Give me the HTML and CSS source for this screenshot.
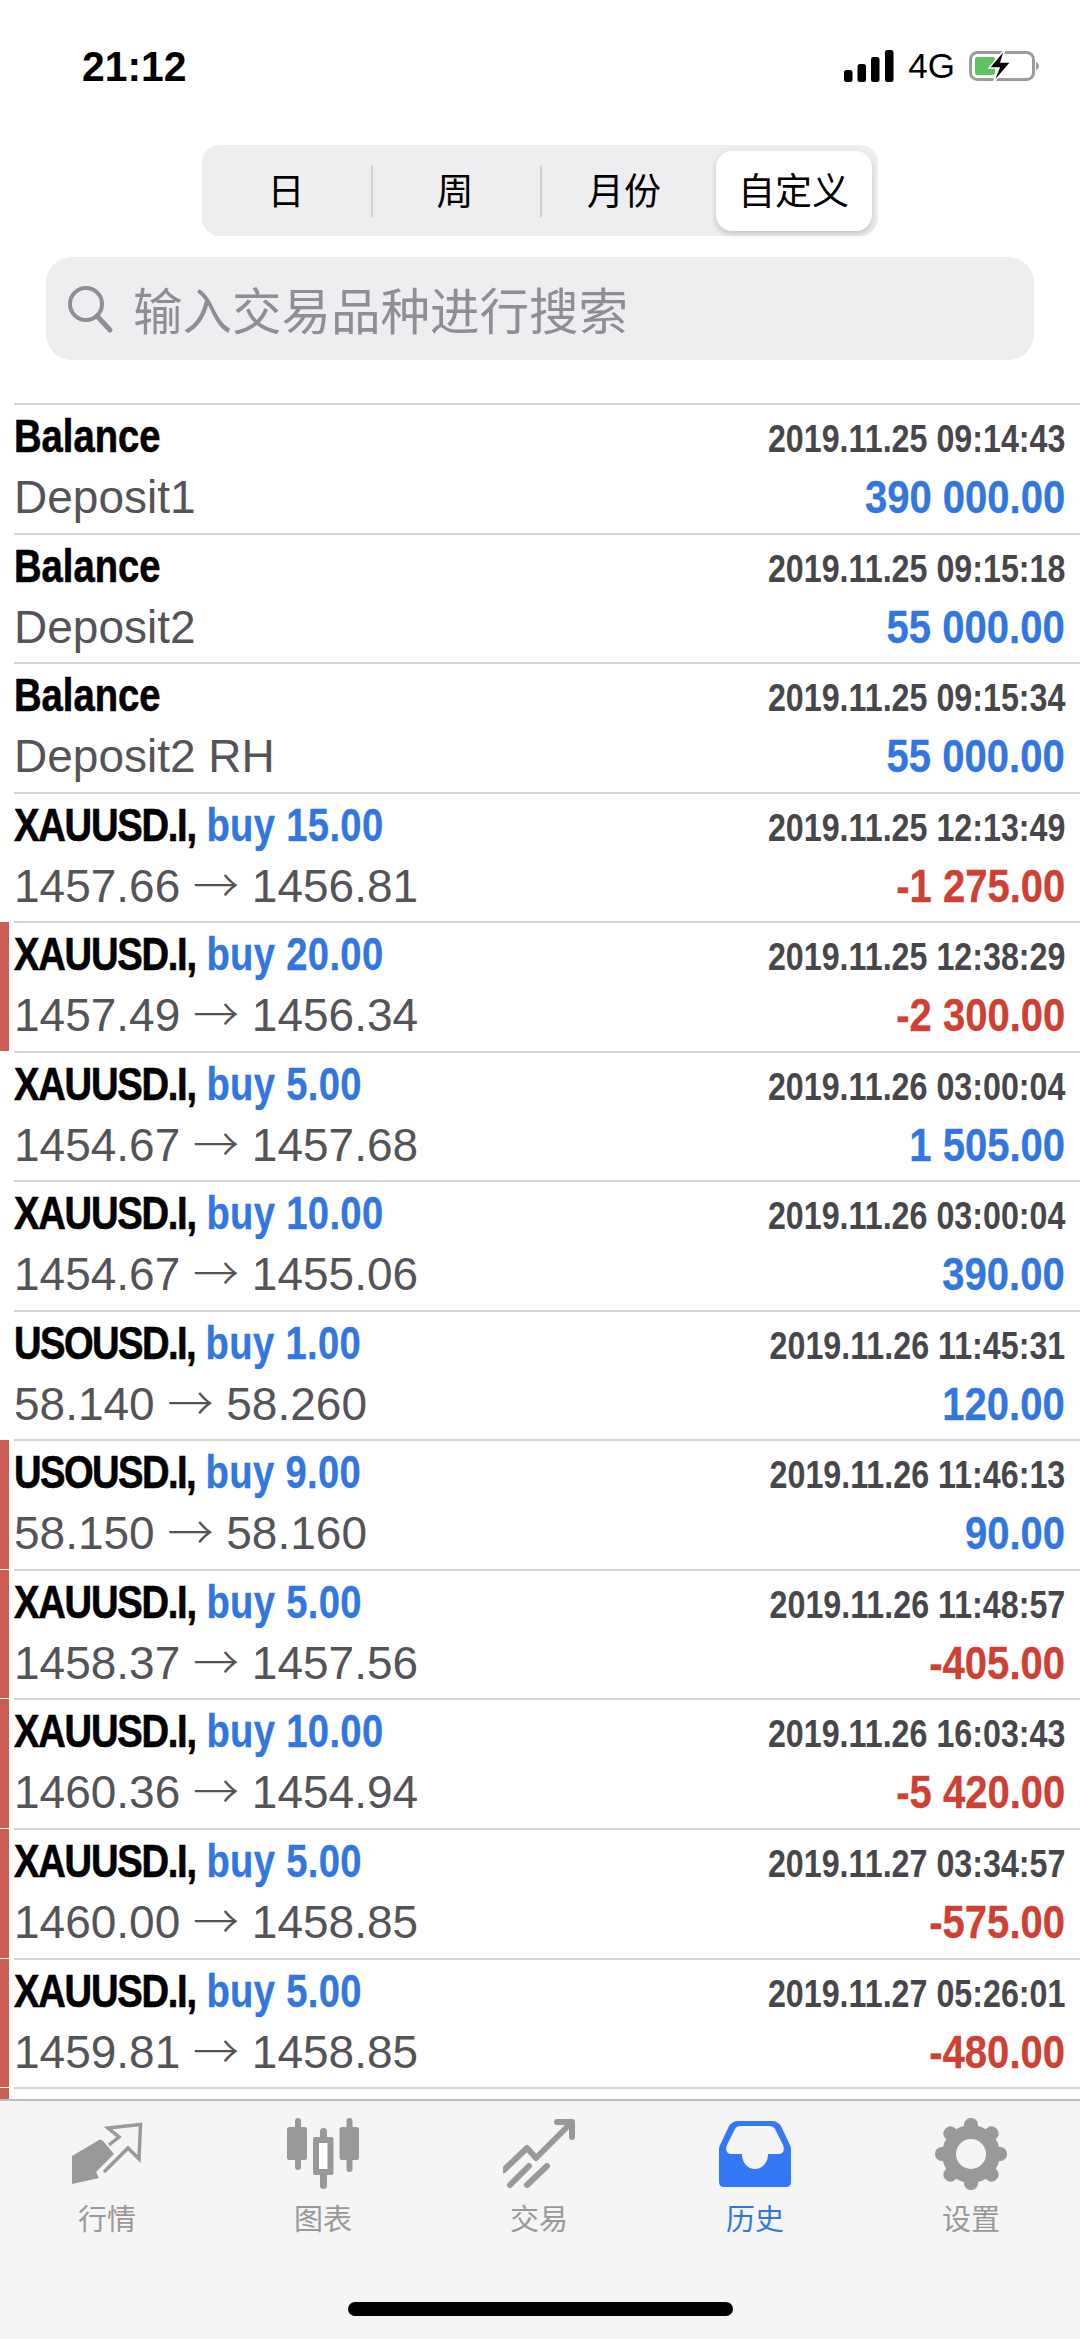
FILE: index.html
```html
<!DOCTYPE html>
<html lang="zh">
<head>
    <meta charset="UTF-8">
    <meta name="viewport" content="width=device-width, initial-scale=1.0">
    <title>历史</title>
    <link rel="stylesheet" href="styles.css">
</head>
<body>
<div class="screen">
    <div class="status">
        <span class="clock">21:12</span>
        <div class="status_right">
            <svg width="50" height="32" viewBox="0 0 50 32"><rect x="0" y="20" width="8.5" height="12" rx="2.5"/><rect x="13.500" y="14" width="8.5" height="18" rx="2.5"/><rect x="27" y="7" width="8.5" height="25" rx="2.5"/><rect x="41" y="0" width="8.5" height="32" rx="2.5"/></svg>
            <span class="net">4G</span>
            <svg width="70" height="36" viewBox="0 0 70 36"><rect x="1.500" y="4.500" width="63" height="27" rx="7" fill="none" stroke="#9b9b9b" stroke-width="3"/><rect x="6" y="9" width="20" height="18" rx="2" fill="#5fc25f"/><path d="M67 14c2 1 3 2.500 3 4s-1 3-3 4z" fill="#9b9b9b"/><path d="M36 1 L20 20 H30 L24 35 L42 14 H32 Z" fill="#000" stroke="#fff" stroke-width="1.500"/></svg>
        </div>
    </div>

    <div class="segment">
        <span class="seg_item">日</span>
        <span class="seg_item seg_line">周</span>
        <span class="seg_item seg_line">月份</span>
        <span class="seg_item seg_active">自定义</span>
    </div>

    <div class="search">
        <svg width="50" height="50" viewBox="0 0 50 50"><circle cx="20" cy="20" r="16" fill="none" stroke="#8e8e93" stroke-width="4"/><path d="M31 32 L44 46" stroke="#8e8e93" stroke-width="5" stroke-linecap="round"/></svg>
        <span>输入交易品种进行搜索</span>
    </div>

    <div class="list">
        <div class="row">
            <div class="line"><span class="title"><b>Balance</b></span><span class="time">2019.11.25 09:14:43</span></div>
            <div class="line"><span class="sub">Deposit1</span><span class="amount blue">390 000.00</span></div>
        </div>
        <div class="row">
            <div class="line"><span class="title"><b>Balance</b></span><span class="time">2019.11.25 09:15:18</span></div>
            <div class="line"><span class="sub">Deposit2</span><span class="amount blue">55 000.00</span></div>
        </div>
        <div class="row">
            <div class="line"><span class="title"><b>Balance</b></span><span class="time">2019.11.25 09:15:34</span></div>
            <div class="line"><span class="sub">Deposit2 RH</span><span class="amount blue">55 000.00</span></div>
        </div>
        <div class="row">
            <div class="line"><span class="title"><b class="sym">XAUUSD.I,</b> <i>buy 15.00</i></span><span class="time">2019.11.25 12:13:49</span></div>
            <div class="line"><span class="sub">1457.66 <span class="arrow">→</span> 1456.81</span><span class="amount red">-1 275.00</span></div>
        </div>
        <div class="row mark">
            <div class="line"><span class="title"><b class="sym">XAUUSD.I,</b> <i>buy 20.00</i></span><span class="time">2019.11.25 12:38:29</span></div>
            <div class="line"><span class="sub">1457.49 <span class="arrow">→</span> 1456.34</span><span class="amount red">-2 300.00</span></div>
        </div>
        <div class="row">
            <div class="line"><span class="title"><b class="sym">XAUUSD.I,</b> <i>buy 5.00</i></span><span class="time">2019.11.26 03:00:04</span></div>
            <div class="line"><span class="sub">1454.67 <span class="arrow">→</span> 1457.68</span><span class="amount blue">1 505.00</span></div>
        </div>
        <div class="row">
            <div class="line"><span class="title"><b class="sym">XAUUSD.I,</b> <i>buy 10.00</i></span><span class="time">2019.11.26 03:00:04</span></div>
            <div class="line"><span class="sub">1454.67 <span class="arrow">→</span> 1455.06</span><span class="amount blue">390.00</span></div>
        </div>
        <div class="row">
            <div class="line"><span class="title"><b class="sym uso">USOUSD.I,</b> <i>buy 1.00</i></span><span class="time">2019.11.26 11:45:31</span></div>
            <div class="line"><span class="sub">58.140 <span class="arrow">→</span> 58.260</span><span class="amount blue">120.00</span></div>
        </div>
        <div class="row mark">
            <div class="line"><span class="title"><b class="sym uso">USOUSD.I,</b> <i>buy 9.00</i></span><span class="time">2019.11.26 11:46:13</span></div>
            <div class="line"><span class="sub">58.150 <span class="arrow">→</span> 58.160</span><span class="amount blue">90.00</span></div>
        </div>
        <div class="row mark">
            <div class="line"><span class="title"><b class="sym">XAUUSD.I,</b> <i>buy 5.00</i></span><span class="time">2019.11.26 11:48:57</span></div>
            <div class="line"><span class="sub">1458.37 <span class="arrow">→</span> 1457.56</span><span class="amount red">-405.00</span></div>
        </div>
        <div class="row mark">
            <div class="line"><span class="title"><b class="sym">XAUUSD.I,</b> <i>buy 10.00</i></span><span class="time">2019.11.26 16:03:43</span></div>
            <div class="line"><span class="sub">1460.36 <span class="arrow">→</span> 1454.94</span><span class="amount red">-5 420.00</span></div>
        </div>
        <div class="row mark">
            <div class="line"><span class="title"><b class="sym">XAUUSD.I,</b> <i>buy 5.00</i></span><span class="time">2019.11.27 03:34:57</span></div>
            <div class="line"><span class="sub">1460.00 <span class="arrow">→</span> 1458.85</span><span class="amount red">-575.00</span></div>
        </div>
        <div class="row mark">
            <div class="line"><span class="title"><b class="sym">XAUUSD.I,</b> <i>buy 5.00</i></span><span class="time">2019.11.27 05:26:01</span></div>
            <div class="line"><span class="sub">1459.81 <span class="arrow">→</span> 1458.85</span><span class="amount red">-480.00</span></div>
        </div>
        <div class="row mark"></div>
    </div>

    <div class="tabbar">
        <div class="tab">
            <svg width="72" height="72" viewBox="0 0 72 72"><path fill="#999" d="M1 38 L28 22 Q30 21 32 23 L43 36 L25 54 L28 60 L1 66 Z"/><path fill="none" stroke="#999" stroke-width="3.500" d="M33 54 L57 30 L68 41 L69.500 6.500 L37 10 L48 19 L38 27"/></svg>
            <span>行情</span>
        </div>
        <div class="tab">
            <svg width="72" height="72" viewBox="0 0 72 72" fill="#999"><rect x="8" y="0" width="6" height="52" rx="3"/><rect x="0" y="9" width="20" height="33" rx="2.500"/><rect x="59.500" y="0" width="6" height="54" rx="3"/><rect x="52.500" y="9" width="19.500" height="33" rx="2.500"/><rect x="33" y="10" width="7" height="61" rx="3.500"/><rect x="26" y="19" width="20.500" height="38" rx="2"/><rect x="32" y="25" width="8.500" height="26" fill="#fff"/></svg>
            <span>图表</span>
        </div>
        <div class="tab">
            <svg width="72" height="72" viewBox="0 0 72 72" fill="none" stroke="#999" stroke-width="6" stroke-linecap="round" stroke-linejoin="round"><path d="M1 52 L24 30 L33 40 L68 5"/><path d="M54 4 H69 V19"/><path d="M7 67 L26 48"/><path d="M24 67 L44 48"/></svg>
            <span>交易</span>
        </div>
        <div class="tab tab_active">
            <svg width="72" height="72" viewBox="0 0 72 72"><path fill="#3478f6" fill-rule="evenodd" d="M19 3 H53 C57 3 60 5 62 8 L70 25 Q72 28 72 31 V64 Q72 69 67 69 H5 Q0 69 0 64 V31 Q0 28 2 25 L10 8 C12 5 15 3 19 3 Z M22 8 C19 8 17 9 16 11 L8 27 C6 32 8 36 12 36 H23 C23 45 29 51 36 51 C43 51 49 45 49 36 H60 C64 36 66 32 64 27 L56 11 C55 9 53 8 50 8 Z"/></svg>
            <span>历史</span>
        </div>
        <div class="tab">
            <svg width="72" height="72" viewBox="0 0 72 72" fill="#999"><rect x="29" y="0" width="14" height="72" rx="6.500"/><rect x="29" y="0" width="14" height="72" rx="6.500" transform="rotate(45 36 36)"/><rect x="29" y="0" width="14" height="72" rx="6.500" transform="rotate(90 36 36)"/><rect x="29" y="0" width="14" height="72" rx="6.500" transform="rotate(135 36 36)"/><circle cx="36" cy="36" r="29"/><circle cx="36" cy="36" r="15" fill="#f5f5f6"/></svg>
            <span>设置</span>
        </div>
        <div class="home_bar"></div>
    </div>
</div>
</body>
</html>
```
FILE: styles.css
```css
html, body {
    margin: 0;
    padding: 0;
    background: #fff;
}
.screen {
    width: 1080px;
    height: 2339px;
    display: flex;
    flex-direction: column;
    overflow: hidden;
    font-family: 'Liberation Sans', 'Noto Sans CJK SC', sans-serif;
}

/* status bar */
.status {
    height: 145px;
    padding: 44px 41px 0 82px;
    box-sizing: border-box;
    display: flex;
    justify-content: space-between;
    align-items: flex-start;
}
.clock {
    font-size: 43px;
    line-height: 44px;
    font-weight: bold;
    color: #000;
    transform: scaleX(0.95);
    transform-origin: left;
}
.status_right {
    margin-top: 4px;
    display: flex;
    align-items: center;
    gap: 14px;
}
.net {
    font-size: 35px;
    line-height: 36px;
    color: #000;
}

/* segment */
.segment {
    align-self: center;
    width: 676px;
    height: 91px;
    margin-left: -1px;
    padding: 6px 4px 5px 0;
    box-sizing: border-box;
    background: #eeeef0;
    border-radius: 18px;
    display: flex;
}
.seg_item {
    width: 169px;
    padding-bottom: 4px;
    box-sizing: border-box;
    display: flex;
    align-items: center;
    justify-content: center;
    font-size: 37px;
    color: #000;
    position: relative;
}
.seg_line::before {
    content: "";
    position: absolute;
    left: 0;
    top: 14px;
    bottom: 14px;
    width: 2px;
    background: #d2d2d4;
}
.seg_active {
    width: 156px;
    margin-left: 7px;
    background: #fff;
    border-radius: 16px;
    box-shadow: 0 3px 6px rgba(0, 0, 0, 0.18);
}

/* search */
.search {
    margin: 21px 46px 0;
    height: 103px;
    padding-left: 20px;
    background: #eeeef1;
    border-radius: 26px;
    display: flex;
    align-items: center;
    gap: 17px;
    font-size: 49.5px;
    color: #8e8e93;
}

/* list */
.list {
    margin-top: 43px;
    height: 1696px;
    overflow: hidden;
}
.row {
    height: 129.55px;
    margin-left: 14px;
    box-sizing: border-box;
    border-top: 2px solid #d4d4d6;
    position: relative;
}
.mark::before {
    content: "";
    position: absolute;
    left: -14px;
    top: -1px;
    bottom: 0;
    width: 9px;
    background: #cd5c52;
}
.line {
    display: flex;
    justify-content: space-between;
    align-items: baseline;
    padding-right: 15px;
    height: 60px;
}
.line:first-child {
    height: 62px;
}
.title {
    display: inline-block;
    font-size: 46px;
    line-height: 62px;
    white-space: nowrap;
    transform: scaleX(0.83);
    transform-origin: left;
}
.title b {
    color: #000;
    -webkit-text-stroke: 0.6px #000;
}
.title .sym {
    letter-spacing: -1.5px;
}
.title .uso {
    letter-spacing: -1.9px;
}
.title i {
    font-style: normal;
    font-weight: bold;
    letter-spacing: 0.4px;
    color: #3277e0;
    -webkit-text-stroke: 0.3px #3277e0;
}
.time {
    display: inline-block;
    font-size: 38.5px;
    font-weight: bold;
    color: #47474b;
    white-space: nowrap;
    transform: scaleX(0.837);
    transform-origin: right;
}
.sub {
    font-size: 46px;
    line-height: 60px;
    color: #545458;
    white-space: nowrap;
}
.arrow {
    font-family: 'Noto Sans CJK SC', sans-serif;
    font-weight: 300;
    line-height: 0;
}
.amount {
    display: inline-block;
    font-size: 46px;
    line-height: 60px;
    font-weight: bold;
    white-space: nowrap;
    transform: scaleX(0.87);
    transform-origin: right;
}
.blue {
    color: #3277e0;
    -webkit-text-stroke: 0.3px #3277e0;
}
.red {
    color: #cf4034;
    -webkit-text-stroke: 0.3px #cf4034;
}

/* tab bar */
.tabbar {
    flex: 1;
    background: #f5f5f6;
    border-top: 2px solid #bdbdc0;
    box-sizing: border-box;
    padding: 17px 0 0 0;
    display: flex;
    position: relative;
}
.tab {
    flex: none;
    width: 216px;
    display: flex;
    flex-direction: column;
    align-items: center;
    gap: 6px;
    font-size: 29px;
    color: #999;
}
.tab:first-child {
    margin-left: -1px;
}
.tab_active {
    color: #3277e0;
}
.home_bar {
    position: absolute;
    left: 348px;
    bottom: 23px;
    width: 385px;
    height: 14px;
    background: #000;
    border-radius: 7px;
}
```
